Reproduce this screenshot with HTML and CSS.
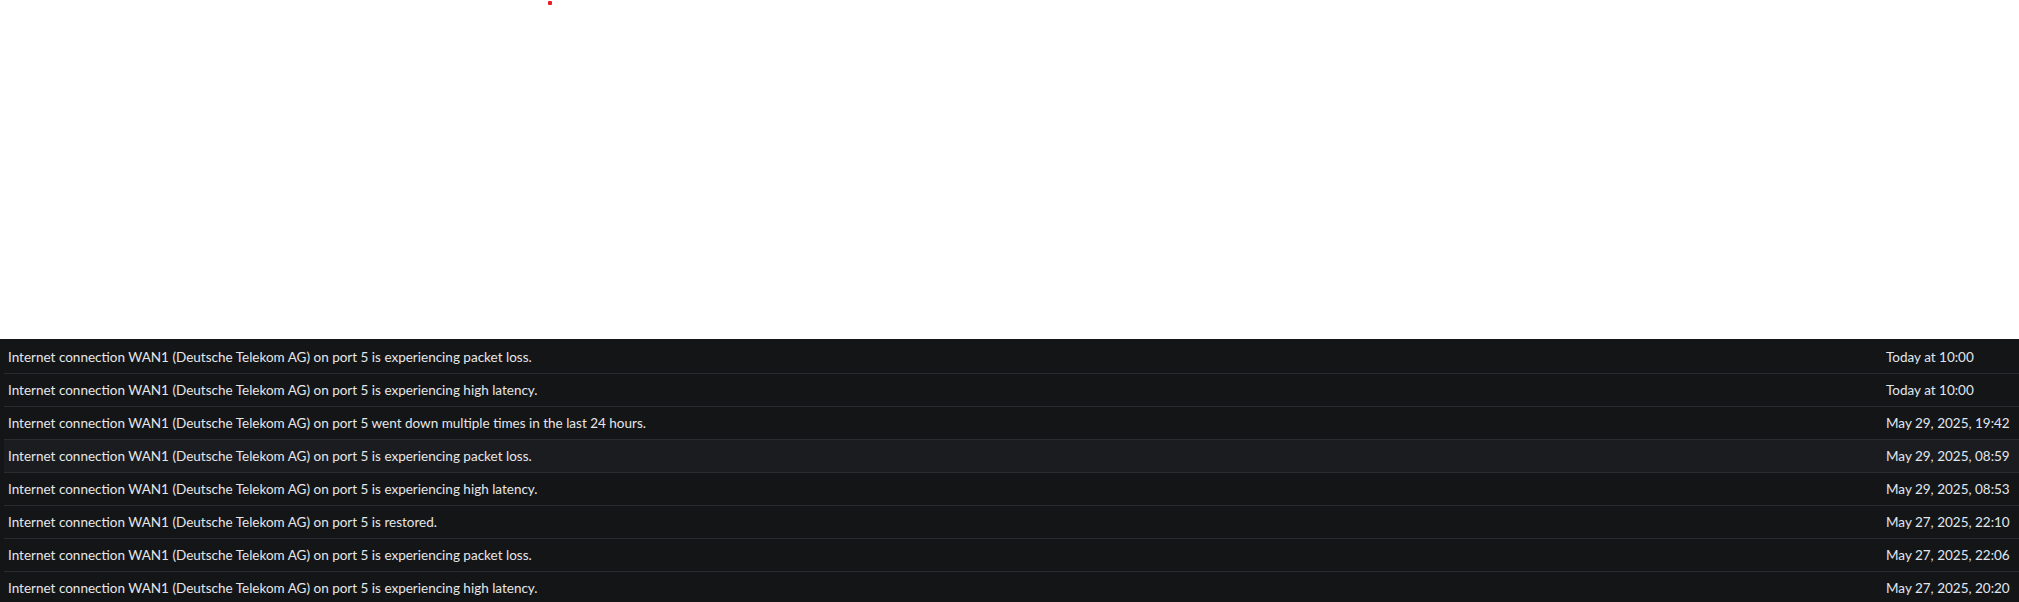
FILE: index.html
```html
<!DOCTYPE html>
<html lang="en">
<head>
  <meta charset="UTF-8" />
  <meta name="viewport" content="width=device-width, initial-scale=1.0"/>
  <title>Notifications</title>
  <link rel="stylesheet" href="styles.css">
</head>
<body>
  <div class="top">
    <span class="dot"></span>
  </div>

  <div class="panel">
    <div class="row">
      <span class="msg">Internet connection WAN1 (Deutsche Telekom AG) on port 5 is experiencing packet loss.</span>
      <span class="time">Today at 10:00</span>
    </div>
    <div class="row">
      <span class="msg">Internet connection WAN1 (Deutsche Telekom AG) on port 5 is experiencing high latency.</span>
      <span class="time">Today at 10:00</span>
    </div>
    <div class="row">
      <span class="msg">Internet connection WAN1 (Deutsche Telekom AG) on port 5 went down multiple times in the last 24 hours.</span>
      <span class="time">May 29, 2025, 19:42</span>
    </div>
    <div class="row hover">
      <span class="msg">Internet connection WAN1 (Deutsche Telekom AG) on port 5 is experiencing packet loss.</span>
      <span class="time">May 29, 2025, 08:59</span>
    </div>
    <div class="row">
      <span class="msg">Internet connection WAN1 (Deutsche Telekom AG) on port 5 is experiencing high latency.</span>
      <span class="time">May 29, 2025, 08:53</span>
    </div>
    <div class="row">
      <span class="msg">Internet connection WAN1 (Deutsche Telekom AG) on port 5 is restored.</span>
      <span class="time">May 27, 2025, 22:10</span>
    </div>
    <div class="row">
      <span class="msg">Internet connection WAN1 (Deutsche Telekom AG) on port 5 is experiencing packet loss.</span>
      <span class="time">May 27, 2025, 22:06</span>
    </div>
    <div class="row">
      <span class="msg">Internet connection WAN1 (Deutsche Telekom AG) on port 5 is experiencing high latency.</span>
      <span class="time">May 27, 2025, 20:20</span>
    </div>
  </div>
</body>
</html>
```

FILE: styles.css
```css
body {
  margin: 0;
  font-family: Lato, "Liberation Sans", sans-serif;
  background-color: #ffffff;
  overflow: hidden;
}
.top {
  height: 339px;
  position: relative;
}
.dot {
  position: absolute;
  left: 548px;
  top: 1px;
  width: 4px;
  height: 4px;
  background: #ec1c24;
  border-radius: 1px;
}
.panel {
  background-color: #141517;
  padding: 2px 0 0 4px;
  height: 261px;
  overflow: hidden;
}
.row {
  display: flex;
  align-items: center;
  height: 32px;
  border-bottom: 1px solid #2a2b2e;
  font-size: 13.5px;
  color: #e6e7e9;
}
.row.hover {
  background-color: #1b1c1f;
}
.msg {
  flex: 1;
  padding-left: 4px;
}
.time {
  width: 133px;
  color: #e0e7ef;
}
```
